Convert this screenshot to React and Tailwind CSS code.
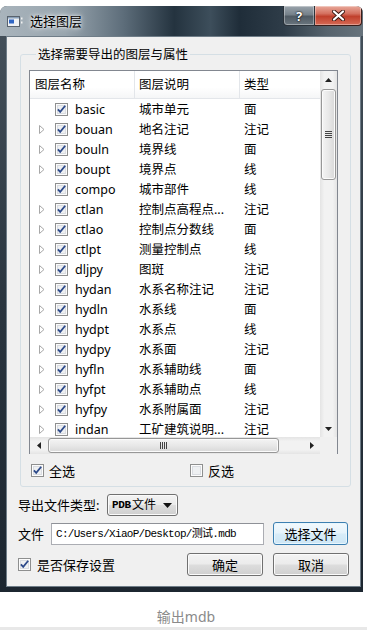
import React from "react";

const rows = [
  ["basic", "城市单元", "面", false],
  ["bouan", "地名注记", "注记", true],
  ["bouln", "境界线", "面", true],
  ["boupt", "境界点", "线", true],
  ["compo", "城市部件", "线", false],
  ["ctlan", "控制点高程点...", "注记", true],
  ["ctlao", "控制点分数线", "面", true],
  ["ctlpt", "测量控制点", "线", true],
  ["dljpy", "图斑", "注记", true],
  ["hydan", "水系名称注记", "注记", true],
  ["hydln", "水系线", "面", true],
  ["hydpt", "水系点", "线", true],
  ["hydpy", "水系面", "注记", true],
  ["hyfln", "水系辅助线", "面", true],
  ["hyfpt", "水系辅助点", "线", true],
  ["hyfpy", "水系附属面", "注记", true],
  ["indan", "工矿建筑说明...", "注记", true],
];

function Checkbox({ checked }) {
  return (
    <svg width="13" height="13" viewBox="0 0 13 13" className="block shrink-0">
      <rect x="0.5" y="0.5" width="12" height="12" fill="#fcfcfc" stroke="#8e8f8f" />
      <rect x="2" y="2" width="9" height="9" fill="#d9dce1" />
      <rect x="3" y="3" width="7" height="7" fill="#eef0f2" />
      {checked && (
        <path d="M2.9 6.4 L5.2 8.9 L10.2 2.8" fill="none" stroke="#2d4a8a" strokeWidth="1.8" />
      )}
    </svg>
  );
}

function ExpandArrow() {
  return (
    <svg width="6" height="9" viewBox="0 0 6 9" className="block">
      <path d="M0.5 0.5 L5 4.5 L0.5 8.5 Z" fill="#ffffff" stroke="#a7a7a7" />
    </svg>
  );
}

function Tri({ dir }) {
  const d = {
    up: "M0 4 L3.5 0 L7 4 Z",
    down: "M0 0 L3.5 4 L7 0 Z",
  }[dir];
  if (dir === "left" || dir === "right") {
    const p = dir === "left" ? "M4 0 L0 3.5 L4 7 Z" : "M0 0 L4 3.5 L0 7 Z";
    return (
      <svg width="4" height="7" viewBox="0 0 4 7" className="block">
        <path d={p} fill="#222" />
      </svg>
    );
  }
  return (
    <svg width="7" height="4" viewBox="0 0 7 4" className="block">
      <path d={d} fill="#222" />
    </svg>
  );
}

function Row({ name, desc, type, arrow }) {
  return (
    <div className="h-[20px] flex items-center shrink-0">
      <div className="w-[105px] flex items-center shrink-0">
        <div className="w-[25px] pl-[9px] flex items-center shrink-0">{arrow && <ExpandArrow />}</div>
        <Checkbox checked />
        <span className="ml-[7px]">{name}</span>
      </div>
      <div className="w-[105px] pl-[4px] whitespace-nowrap overflow-hidden shrink-0">{desc}</div>
      <div className="w-[80px] pl-[4px] whitespace-nowrap shrink-0">{type}</div>
    </div>
  );
}

const btnCls =
  "h-[23px] rounded-[3px] border border-[#707070] bg-[linear-gradient(180deg,#f3f3f3_0%,#ebebeb_48%,#dddddd_52%,#cfcfcf_100%)] shadow-[inset_0_0_0_1px_#fbfbfb] flex items-center justify-center text-[13px] leading-[16px] text-black";

export default function App() {
  return (
    <div className="w-[367px] h-[630px] bg-white flex flex-col overflow-hidden font-['Noto_Sans','Noto_Sans_CJK_SC',sans-serif] text-black">
      <div className="h-[6px] shrink-0" />
      {/* Window */}
      <div className="w-[363px] h-[586px] shrink-0 flex flex-col rounded-t-[7px] overflow-hidden bg-[linear-gradient(180deg,#46525c_0%,#2a353f_50%,#1c2630_100%)]">
        {/* Title bar */}
        <div className="h-[30px] shrink-0 flex items-start bg-[linear-gradient(90deg,#a9b4bc_0%,#98a5ae_18%,#5d6d7a_34%,#24333f_48%,#3d4e5b_58%,#1f2d39_66%,#2e3c48_78%,#56636d_90%,#67737c_100%)]">
          <div className="h-[30px] flex items-center pl-[7px]">
            <svg width="16" height="11" viewBox="0 0 16 11" className="block">
              <rect x="0.5" y="0.5" width="12" height="10" fill="#eef1f4" stroke="#59636e" />
              <rect x="1" y="1" width="11" height="1.5" fill="#8aa0b8" />
              <rect x="2" y="3.5" width="5" height="4" fill="#2f66c4" />
              <rect x="14" y="1.5" width="1.5" height="2" fill="#f2f2f2" />
              <rect x="14" y="5.5" width="1.5" height="2" fill="#f2f2f2" />
            </svg>
            <span className="ml-[7px] text-[13px] leading-[16px] text-black [text-shadow:0_0_6px_#ffffff,0_0_3px_#ffffff]">
              选择图层
            </span>
          </div>
          <div className="ml-auto mr-[1px] flex">
            <div className="w-[32px] h-[20px] rounded-bl-[4px] border border-t-0 border-[#2a323a] bg-[linear-gradient(180deg,#9aa4ac_0%,#76818a_45%,#505b64_55%,#6a757e_100%)] shadow-[inset_0_0_0_1px_rgba(255,255,255,0.35)] flex items-center justify-center">
              <span className="text-[13px] leading-[14px] font-bold text-white [text-shadow:0_0_2px_#000,0_0_1px_#000]">?</span>
            </div>
            <div className="w-[47px] h-[20px] rounded-br-[4px] border border-t-0 border-l-0 border-[#3a1d19] bg-[linear-gradient(180deg,#e9a99b_0%,#d4705f_40%,#c0402c_55%,#d66a55_100%)] shadow-[inset_0_0_0_1px_rgba(255,255,255,0.35)] flex items-center justify-center">
              <svg width="13" height="11" viewBox="0 0 13 11" className="block">
                <path d="M2 1.5 L11 9.5 M11 1.5 L2 9.5" stroke="#3b1a14" strokeWidth="4" strokeLinecap="round" />
                <path d="M2 1.5 L11 9.5 M11 1.5 L2 9.5" stroke="#ffffff" strokeWidth="2.2" strokeLinecap="round" />
              </svg>
            </div>
          </div>
        </div>

        {/* Client area */}
        <div className="flex-1 ml-[6px] mr-[2px] mb-[5px] border border-[#6f7d88] bg-[#f0f0f0] flex flex-col pl-[11px] pr-[9px]">
          <fieldset className="mt-[10px] ml-[2px] border border-[#d5dfe5] rounded-[3px] pl-[8px] pb-[9px] flex flex-col">
            <legend className="ml-[7px] px-[2px] text-[12.5px] leading-[15px]">选择需要导出的图层与属性</legend>
            {/* list */}
            <div className="mt-[8px] w-[309px] h-[384px] border border-[#828790] bg-white flex flex-col text-[12.5px] leading-[15px]">
              <div className="flex h-[366px] shrink-0">
                <div className="w-[290px] flex flex-col overflow-hidden shrink-0">
                  <div className="h-[28px] shrink-0 flex border-b border-[#e3e6ea] bg-[linear-gradient(180deg,#ffffff_0%,#ffffff_60%,#f5f6f7_100%)]">
                    <div className="w-[105px] pl-[5px] flex items-center border-r border-[#e3e6ea] shrink-0">图层名称</div>
                    <div className="w-[105px] pl-[4px] flex items-center border-r border-[#e3e6ea] shrink-0">图层说明</div>
                    <div className="w-[80px] pl-[4px] flex items-center shrink-0">类型</div>
                  </div>
                  <div className="flex-1 overflow-hidden flex flex-col">
                    {rows.map((r) => (
                      <Row key={r[0]} name={r[0]} desc={r[1]} type={r[2]} arrow={r[3]} />
                    ))}
                  </div>
                </div>
                {/* vertical scrollbar */}
                <div className="w-[17px] flex flex-col shrink-0 bg-[linear-gradient(90deg,#e4e4e4_0%,#f2f2f2_25%,#f2f2f2_75%,#e4e4e4_100%)]">
                  <div className="h-[17px] flex items-center justify-center shrink-0">
                    <Tri dir="up" />
                  </div>
                  <div className="mx-[1px] mt-[1px] h-[91px] shrink-0 rounded-[3px] border border-[#979797] bg-[linear-gradient(90deg,#f4f4f4_0%,#e8e8e8_50%,#d8d8d8_100%)] shadow-[inset_0_0_0_1px_#fbfbfb] flex flex-col items-center justify-center gap-[1px]">
                    <div className="w-[7px] h-[1px] bg-[#444]" />
                    <div className="w-[7px] h-[1px] bg-[#444]" />
                    <div className="w-[7px] h-[1px] bg-[#444]" />
                    <div className="w-[7px] h-[1px] bg-[#444]" />
                  </div>
                  <div className="flex-1" />
                  <div className="h-[17px] flex items-center justify-center shrink-0">
                    <Tri dir="down" />
                  </div>
                </div>
              </div>
              {/* horizontal scrollbar */}
              <div className="h-[17px] flex shrink-0">
                <div className="w-[290px] flex shrink-0 bg-[linear-gradient(180deg,#e4e4e4_0%,#f2f2f2_25%,#f2f2f2_75%,#e4e4e4_100%)]">
                  <div className="w-[17px] flex items-center justify-center shrink-0">
                    <Tri dir="left" />
                  </div>
                  <div className="ml-[1px] my-[1px] w-[231px] shrink-0 rounded-[3px] border border-[#979797] bg-[linear-gradient(180deg,#f4f4f4_0%,#e8e8e8_50%,#d8d8d8_100%)] shadow-[inset_0_0_0_1px_#fbfbfb] flex items-center justify-center gap-[1px]">
                    <div className="w-[1px] h-[7px] bg-[#444]" />
                    <div className="w-[1px] h-[7px] bg-[#444]" />
                    <div className="w-[1px] h-[7px] bg-[#444]" />
                    <div className="w-[1px] h-[7px] bg-[#444]" />
                  </div>
                  <div className="flex-1" />
                  <div className="w-[17px] flex items-center justify-center shrink-0">
                    <Tri dir="right" />
                  </div>
                </div>
                <div className="w-[17px] shrink-0 bg-[#f0f0f0]" />
              </div>
            </div>
            {/* select all row */}
            <div className="mt-[10px] h-[13px] flex items-center pl-[2px] text-[13px] leading-[16px]">
              <div className="w-[159px] flex items-center shrink-0">
                <Checkbox checked />
                <span className="ml-[5px]">全选</span>
              </div>
              <div className="flex items-center">
                <Checkbox checked={false} />
                <span className="ml-[5px]">反选</span>
              </div>
            </div>
          </fieldset>

          {/* export type row */}
          <div className="mt-[7px] h-[22px] flex items-center text-[13px] leading-[16px]">
            <span className="w-[89px] shrink-0 whitespace-nowrap">导出文件类型:</span>
            <div className="w-[71px] h-[22px] rounded-[3px] border border-[#707070] bg-[linear-gradient(180deg,#f3f3f3_0%,#ebebeb_48%,#dddddd_52%,#cfcfcf_100%)] shadow-[inset_0_0_0_1px_#fbfbfb] flex items-center pl-[4px]">
              <span className="font-['Liberation_Mono','Noto_Sans_CJK_SC',monospace] text-[11px] leading-[14px] font-bold tracking-[-0.3px]">PDB</span>
              <span className="text-[12px] leading-[14px] ml-[1px]">文件</span>
              <svg width="9" height="5" viewBox="0 0 9 5" className="block ml-auto mr-[5px]">
                <path d="M0 0 L9 0 L4.5 5 Z" fill="#111" />
              </svg>
            </div>
          </div>

          {/* file row */}
          <div className="mt-[6px] h-[23px] flex items-center text-[13px] leading-[16px]">
            <span className="w-[33px] shrink-0">文件</span>
            <div className="w-[213px] h-[22px] shrink-0 border border-[#abadb3] border-t-[#8e9197] bg-white flex items-center pl-[4px] overflow-hidden whitespace-nowrap">
              <span className="font-['Liberation_Mono','Noto_Sans_CJK_SC',monospace] text-[11px] leading-[14px] tracking-[-0.7px]">
                C:/Users/XiaoP/Desktop/测试.mdb
              </span>
            </div>
            <div className="ml-[9px] w-[75px] h-[23px] rounded-[3px] border border-[#3c7fb1] bg-[linear-gradient(180deg,#f2f9fd_0%,#e6f3fb_48%,#d8ecf8_52%,#cde6f5_100%)] shadow-[inset_0_0_0_1px_#e8f6fd] flex items-center justify-center text-[13px] leading-[16px]">
              选择文件
            </div>
          </div>

          {/* save row */}
          <div className="mt-[8px] h-[23px] flex items-center text-[13px] leading-[16px]">
            <Checkbox checked />
            <span className="ml-[6px]">是否保存设置</span>
            <div className="ml-auto mr-[2px] flex gap-[10px]">
              <div className={btnCls + " w-[76px]"}>确定</div>
              <div className={btnCls + " w-[76px]"}>取消</div>
            </div>
          </div>
        </div>
      </div>

      <div className="h-[35px] shrink-0 pt-[17px] pl-[5px] flex justify-center text-[14px] leading-[16px] text-[#8a8a8a]">
        输出mdb
      </div>
      <div className="h-[3px] shrink-0 bg-[#e8e8e8]" />
    </div>
  );
}
